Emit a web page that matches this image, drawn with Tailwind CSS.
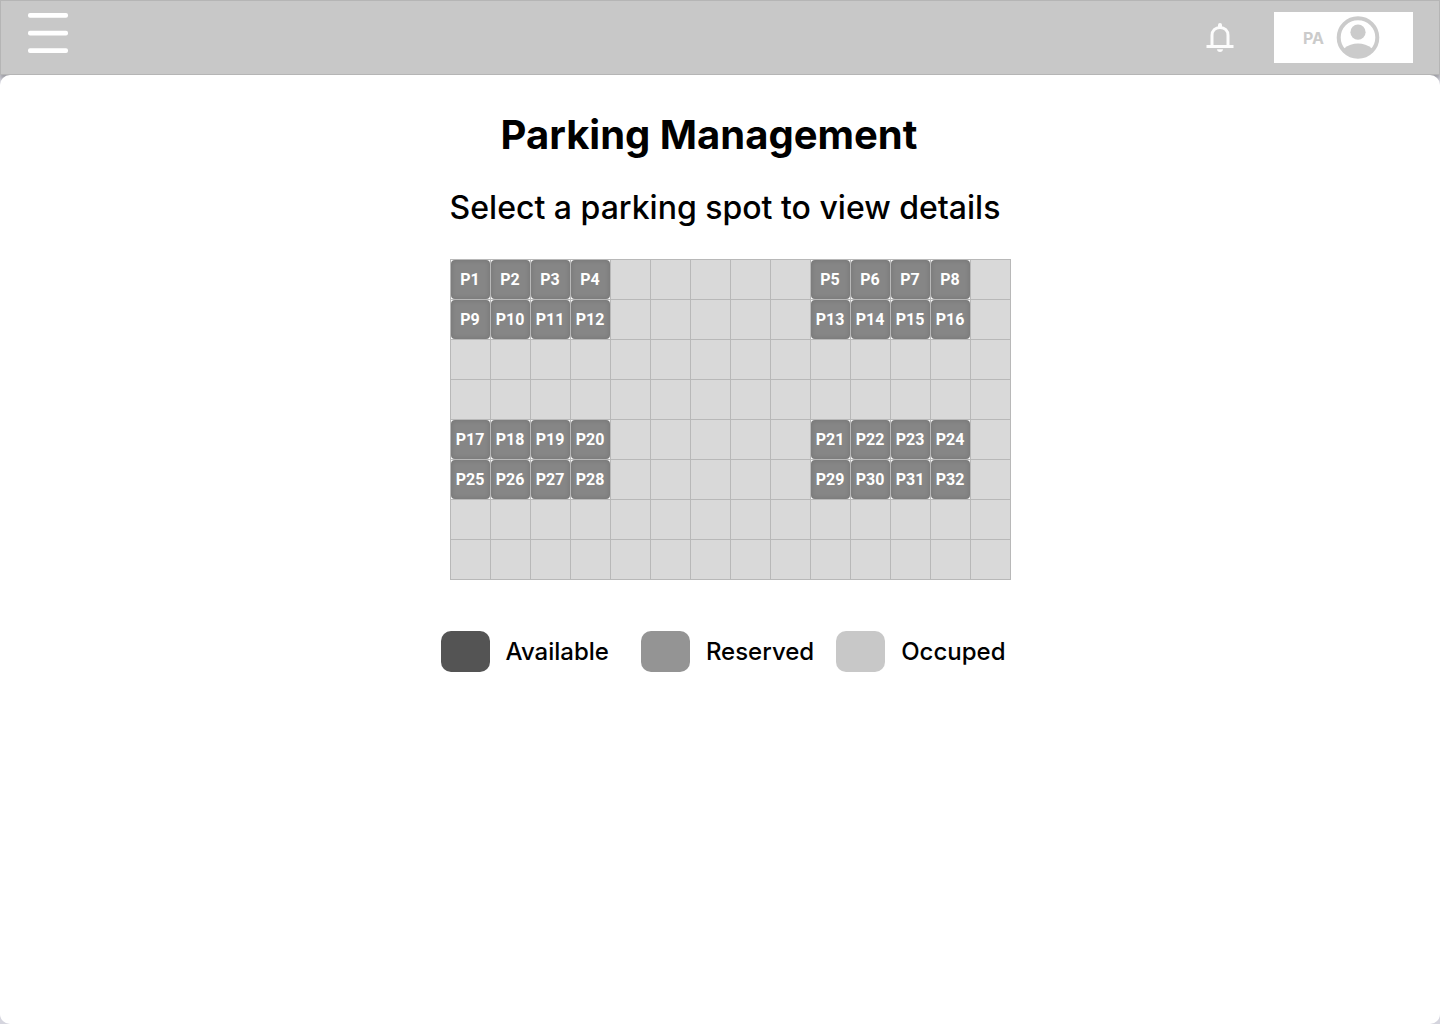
<!DOCTYPE html>
<html lang="en">
<head>
<meta charset="utf-8">
<meta name="viewport" content="width=device-width, initial-scale=1">
<title>Parking Management</title>
<script src="https://cdn.jsdelivr.net/npm/@tailwindcss/browser@4"></script>
</head>
<body class="flex min-h-screen flex-col bg-[#d5d5de] font-['Inter',sans-serif] text-black">
  <header class="flex h-[75px] items-start justify-between border border-[#b5b5b5] bg-[#c8c8c8] pr-[26px] pl-[27px] shadow-[0_4px_4px_#00000040]">
    <button type="button" aria-label="Open menu" class="mt-3">
      <svg class="h-10 w-10" viewBox="0 0 40 40" fill="#fff">
        <rect width="40" height="4.700" rx="2"/>
        <rect y="17.700" width="40" height="4.700" rx="2"/>
        <rect y="35.300" width="40" height="4.700" rx="2"/>
      </svg>
    </button>
    <div class="mt-[11px] flex items-center gap-[38px]">
      <button type="button" aria-label="Notifications">
        <svg class="h-8 w-8" viewBox="0 0 32 32" fill="none">
          <path d="M8 24V13.500C8 8.500 11.500 5.500 16 5.500S24 8.500 24 13.500V24" stroke="#fcfcfc" stroke-width="3"/>
          <path d="M2.500 23h27v3h-27zM13 27.200h6c0 1.600-1.200 2.800-3 2.800s-3-1.200-3-2.800zM14 5V3a2 2 0 0 1 4 0v2z" fill="#fcfcfc"/>
        </svg>
      </button>
      <button type="button" aria-label="Account PA" class="flex h-[51px] w-[139px] items-center gap-3 bg-white pl-[29px] font-bold text-[#cbcbcb]">
        <span class="text-base">PA</span>
        <svg class="h-11 w-11" viewBox="0 0 44 44">
          <circle cx="22" cy="21.500" r="19.300" fill="none" stroke="#cbcbcb" stroke-width="4"/>
          <circle cx="22" cy="16.200" r="7.600" fill="#cbcbcb"/>
          <path d="M8 32.500c4-3.500 9-5 14-5s10 1.500 14 5c-3 5-8 8.500-14 8.500S11 37.500 8 32.500z" fill="#cbcbcb"/>
        </svg>
      </button>
    </div>
  </header>
  <main class="relative flex grow flex-col items-center rounded-[10px] bg-white pt-9">
    <h1 class="pr-[22px] text-[40px] leading-12 font-bold">Parking Management</h1>
    <p class="mt-[25px] pl-[10px] text-[32px] leading-12 font-medium">Select a parking spot to view details</p>
    <div class="pl-[21px]">
      <div id="lot" class="mt-[27px] grid grid-cols-[repeat(14,40px)] auto-rows-[40px] border-t border-l border-[#b8b8b8] bg-[#d9d9d9]"></div>
    </div>
    <ul class="mt-[51px] flex items-center pl-[6px] text-2xl leading-10 font-medium">
      <li class="flex items-center gap-4"><span class="h-[41px] w-[49px] rounded-[10px] bg-[#545454]"></span>Available</li>
      <li class="ml-8 flex items-center gap-4"><span class="h-[41px] w-[49px] rounded-[10px] bg-[#949494]"></span>Reserved</li>
      <li class="ml-[22px] flex items-center gap-4"><span class="h-[41px] w-[49px] rounded-[10px] bg-[#c8c8c8]"></span>Occuped</li>
    </ul>
  </main>
  <script>
    // Rows and columns of the lot that hold parking spots; the rest is driveway.
    const spotRows = [0, 1, 4, 5], spotCols = [0, 1, 2, 3, 9, 10, 11, 12];
    // Spots are numbered row by row across the lot.
    const lot = document.getElementById('lot');
    let n = 0, html = '';
    for (let r = 0; r < 8; r++) {
      for (let c = 0; c < 14; c++) {
        const spot = spotRows.includes(r) && spotCols.includes(c);
        html += spot
          ? `<div class="border-r border-b border-[#b8b8b8] bg-white"><button type="button" class="h-full w-full rounded-[4px] bg-[#868686] pr-px font-['Roboto',sans-serif] text-base font-bold text-white shadow-[inset_0_0_5px_#00000026]">P${++n}</button></div>`
          : '<div class="border-r border-b border-[#b8b8b8]"></div>';
      }
    }
    lot.innerHTML = html;
  </script>
</body>
</html>
